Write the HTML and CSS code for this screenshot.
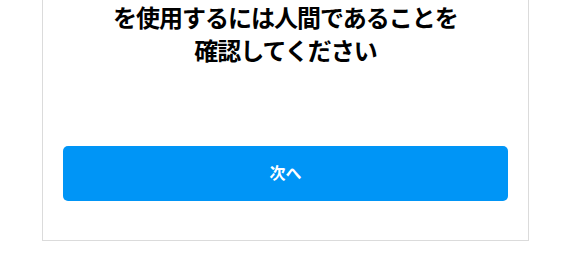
FILE: index.html
```html
<!DOCTYPE html>
<html lang="ja">
<head>
<meta charset="utf-8">
<link rel="stylesheet" href="styles.css">
</head>
<body>
<div class="card">
  <h1 class="title">を使用するには人間であることを<br>確認してください</h1>
  <div class="actions">
    <button class="next" type="button">次へ</button>
  </div>
</div>
</body>
</html>
```
FILE: styles.css
```css
html, body {
  margin: 0;
  padding: 0;
  background: #ffffff;
}
body {
  font-family: "Noto Sans CJK JP", "Noto Sans", sans-serif;
}
.card {
  box-sizing: border-box;
  width: 487px;
  margin-left: 42px;
  border: 1px solid #dbdbdb;
  border-top: 0;
  padding: 0 20px 39px;
}
.title {
  margin: 0;
  font-size: 24px;
  line-height: 33px;
  font-weight: 700;
  letter-spacing: -1px;
  color: #000000;
  text-align: center;
}
.actions {
  padding-top: 80px;
}
.next {
  display: block;
  width: 100%;
  height: 55px;
  border: 0;
  border-radius: 5px;
  background: #0095f6;
  color: #ffffff;
  font-family: "Noto Sans CJK JP", "Noto Sans", sans-serif;
  font-size: 16px;
  font-weight: 700;
  padding: 0 0 3px;
}
```
